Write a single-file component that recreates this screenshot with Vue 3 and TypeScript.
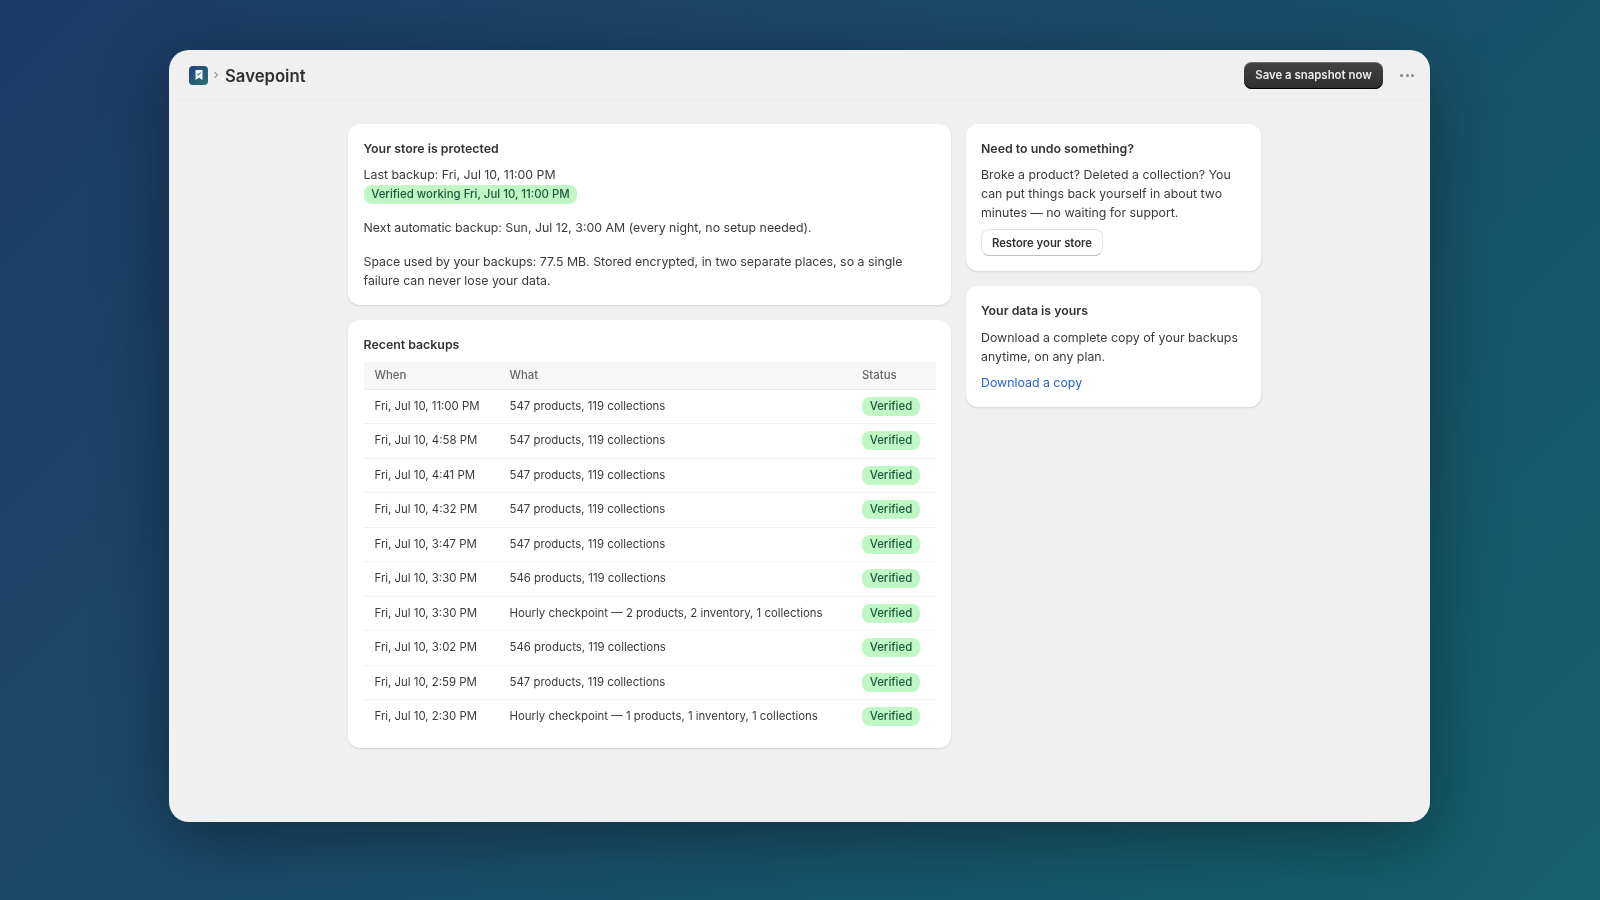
<script setup lang="ts">
interface Row { when: string; what: string }
const p547 = '547 products, 119 collections'
const p546 = '546 products, 119 collections'
const rows: Row[] = [
  { when: 'Fri, Jul 10, 11:00 PM', what: p547 },
  { when: 'Fri, Jul 10, 4:58 PM', what: p547 },
  { when: 'Fri, Jul 10, 4:41 PM', what: p547 },
  { when: 'Fri, Jul 10, 4:32 PM', what: p547 },
  { when: 'Fri, Jul 10, 3:47 PM', what: p547 },
  { when: 'Fri, Jul 10, 3:30 PM', what: p546 },
  { when: 'Fri, Jul 10, 3:30 PM', what: 'Hourly checkpoint — 2 products, 2 inventory, 1 collections' },
  { when: 'Fri, Jul 10, 3:02 PM', what: p546 },
  { when: 'Fri, Jul 10, 2:59 PM', what: p547 },
  { when: 'Fri, Jul 10, 2:30 PM', what: 'Hourly checkpoint — 1 products, 1 inventory, 1 collections' },
]
</script>

<template>
  <div class="stage">
    <div class="window">
      <header class="topbar">
        <div class="brand">
          <span class="logo">
            <svg width="12" height="12" viewBox="0 0 12 12">
              <path d="M2.5 1h7v10L6 8.8 2.5 11z" fill="#f4f7f8" />
              <path d="M4.3 4.6l1.2 1.2 2.2-2.2" fill="none" stroke="#2f7f78" stroke-width="1.1" />
            </svg>
          </span>
          <svg class="chev" width="8" height="10" viewBox="0 0 8 10">
            <path d="M2.5 2l3 3-3 3" fill="none" stroke="#9a9a9a" stroke-width="1.1" />
          </svg>
          <span class="name">Savepoint</span>
        </div>
        <div class="actions">
          <button class="primary">Save a snapshot now</button>
          <span class="dots"><i></i><i></i><i></i></span>
        </div>
      </header>
      <main class="content">
        <div class="left">
          <section class="card">
            <h2>Your store is protected</h2>
            <p class="last">Last backup: Fri, Jul 10, 11:00 PM</p>
            <span class="badge wide">Verified working Fri, Jul 10, 11:00 PM</span>
            <p class="para">Next automatic backup: Sun, Jul 12, 3:00 AM (every night, no setup needed).</p>
            <p class="para">Space used by your backups: 77.5 MB. Stored encrypted, in two separate places, so a single failure can never lose your data.</p>
          </section>
          <section class="card table-card">
            <h2>Recent backups</h2>
            <table>
              <thead>
                <tr><th class="c1">When</th><th class="c2">What</th><th class="c3">Status</th></tr>
              </thead>
              <tbody>
                <tr v-for="(r, i) in rows" :key="i">
                  <td>{{ r.when }}</td>
                  <td>{{ r.what }}</td>
                  <td><span class="badge">Verified</span></td>
                </tr>
              </tbody>
            </table>
          </section>
        </div>
        <div class="right">
          <section class="card">
            <h2>Need to undo something?</h2>
            <p class="body">Broke a product? Deleted a collection? You can put things back yourself in about two minutes — no waiting for support.</p>
            <button class="secondary">Restore your store</button>
          </section>
          <section class="card second">
            <h2>Your data is yours</h2>
            <p class="body">Download a complete copy of your backups anytime, on any plan.</p>
            <a class="link" href="#">Download a copy</a>
          </section>
        </div>
      </main>
    </div>
  </div>
</template>

<style>
html, body { margin: 0; padding: 0; }
</style>

<style scoped>
.stage {
  width: 1600px;
  height: 900px;
  box-sizing: border-box;
  padding: 50px 170px 78px 169px;
  background: linear-gradient(135deg, #1e3a68 0%, #14616b 100%);
  font-family: Inter, "Liberation Sans", sans-serif;
  font-size: 12.35px;
  line-height: 19px;
  color: #3a3a3a;
  overflow: hidden;
}
.window {
  height: 772px;
  background: #f0f0f0;
  border-radius: 20px;
  box-shadow: 0 16px 70px rgba(0, 0, 0, 0.38);
  overflow: hidden;
  filter: blur(0.35px);
}
.topbar {
  height: 51px;
  box-sizing: border-box;
  border-bottom: 1px solid #ebebeb;
  display: flex;
  align-items: center;
  justify-content: space-between;
  padding: 0 15px 0 20px;
}
.brand { display: flex; align-items: center; }
.logo {
  width: 19px;
  height: 19px;
  border-radius: 4px;
  background: linear-gradient(135deg, #24427a, #2a7074);
  display: flex;
  align-items: center;
  justify-content: center;
}
.chev { margin: 0 4px 0 4px; }
.name { font-size: 16.7px; font-weight: 600; line-height: 24px; color: #303030; margin: 1px 0 0 1px; }
.actions { display: flex; align-items: center; gap: 16px; }
.primary {
  height: 27px;
  width: 139px;
  padding: 0;
  border: none;
  border-radius: 8px;
  background: linear-gradient(#424242, #2e2e2e);
  box-shadow: inset 0 1px 0 rgba(255, 255, 255, 0.2), inset 0 -1px 0 #000;
  color: #ececec;
  font: 600 11.4px/16px Inter, "Liberation Sans", sans-serif;
}
.dots { display: flex; gap: 2.5px; width: 14px; padding: 0 1px; }
.dots i { width: 3px; height: 3px; border-radius: 50%; background: #8a8a8a; }
.content {
  display: flex;
  align-items: flex-start;
  gap: 15px;
  padding: 23px 0 0 179px;
}
.left { width: 603px; display: flex; flex-direction: column; gap: 15px; }
.left .card { padding-left: 15.5px; }
.right { width: 295px; display: flex; flex-direction: column; gap: 15px; }
.card {
  background: #fff;
  border-radius: 12px;
  padding: 15px;
  box-shadow: 0 1px 2px rgba(0, 0, 0, 0.12);
}
.second { padding-bottom: 15.5px; }
.second h2 { margin-bottom: 7.5px; }
h2 { margin: 0 0 7px; font-size: 12.35px; line-height: 19px; font-weight: 600; color: #333; }
p { margin: 0; color: #3a3a3a; }
.last { margin: 0; }
.para { margin-top: 15px; }
.badge {
  display: inline-block;
  background: #bff8c4;
  color: #1a5a3c;
  font-size: 11.4px;
  font-weight: 550;
  line-height: 19px;
  padding: 0 7.7px;
  border-radius: 8px;
}
.badge.wide { display: block; width: fit-content; margin-top: 1px; margin-bottom: -1px; }
table { width: 100%; border-collapse: collapse; margin-top: 8px; font-size: 11.4px; }
th {
  background: #f7f7f7;
  color: #666;
  font-weight: 500;
  text-align: left;
  height: 26.5px;
  padding: 0 0 0 11px;
  border-bottom: 1px solid #ebebeb;
}
.c1 { width: 124px; }
.c3 { width: 74px; }
td {
  height: 33.5px;
  padding: 0 0 0 11px;
  border-bottom: 1px solid #f0f0f0;
  color: #3a3a3a;
}
tbody tr:last-child td { border-bottom: none; }
.table-card { padding-bottom: 14.5px; }
.body { margin-bottom: 7px; }
.secondary {
  height: 27px;
  width: 122px;
  padding: 0;
  border: 1px solid #e3e3e3;
  border-bottom-color: #bdbdbd;
  border-radius: 8px;
  background: #fff;
  color: #333;
  font: 600 11.3px/16px Inter, "Liberation Sans", sans-serif;
}
.link { color: #2563d0; text-decoration: none; display: block; margin-top: 0.5px; }
</style>
